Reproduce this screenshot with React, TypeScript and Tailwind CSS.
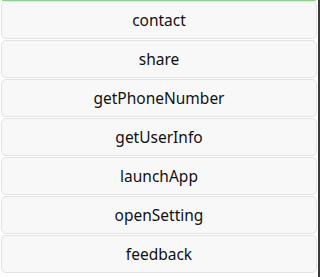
const items = ['contact', 'share', 'getPhoneNumber', 'getUserInfo', 'launchApp', 'openSetting', 'feedback']

export default function App() {
  return (
    <div className="flex h-[277px] w-[320px] bg-white" style={{ fontFamily: '"Noto Sans", "Open Sans", sans-serif' }}>
      <div className="flex w-[318px] flex-col">
        <div className="mx-[2px] h-px bg-[#8fd18f]" />
        <div className="flex flex-col gap-px px-px">
          {items.map((t) => (
            <button
              key={t}
              className="flex h-[38px] w-full items-center justify-center rounded-[5px] border border-[#e3e3e3] bg-[#f8f8f8] pt-[2px] text-[15.5px] text-[#111]"
            >
              {t}
            </button>
          ))}
        </div>
      </div>
      <div className="w-[2px] bg-[#3a3a3a]" />
    </div>
  )
}
